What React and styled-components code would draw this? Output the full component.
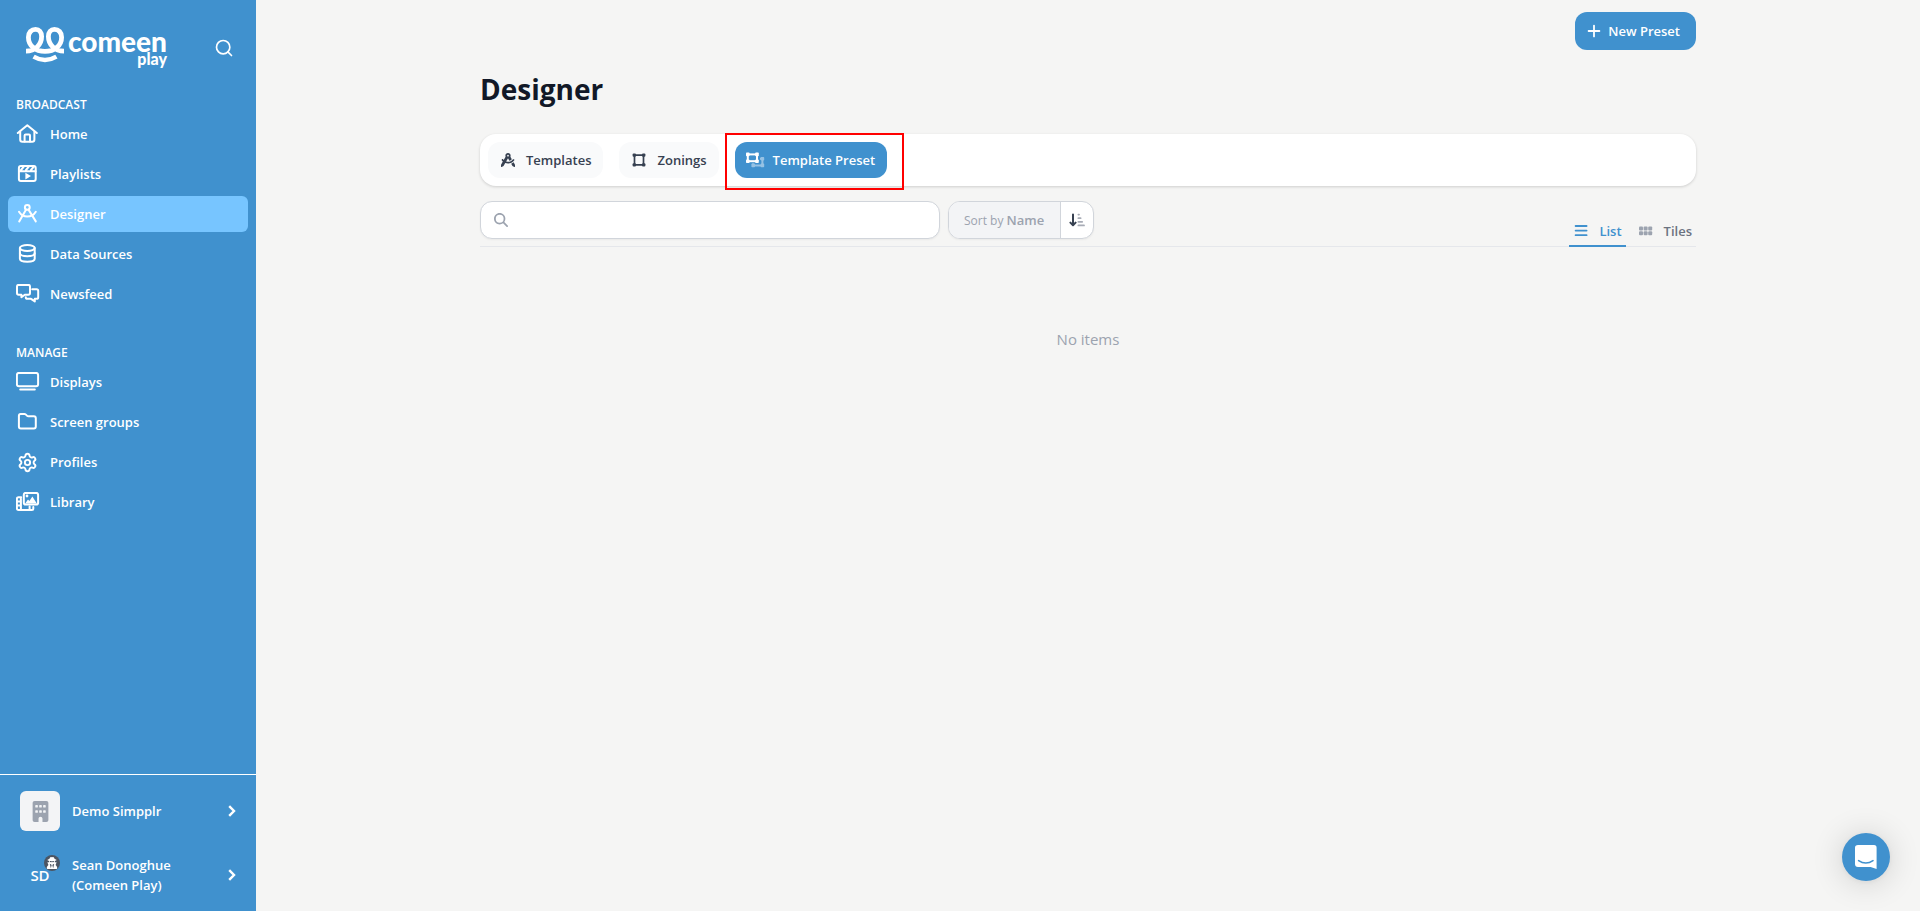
import React, { useState } from 'react';
import styled, { createGlobalStyle, ThemeProvider } from 'styled-components';
import { Search, Settings } from 'lucide-react';
import {
  FaBuilding,
  FaCompassDrafting,
  FaMagnifyingGlass,
  FaUserSecret,
} from 'react-icons/fa6';

const theme = {
  colors: {
    primary: '#4091ce',
    active: '#77c5ff',
    background: '#f5f5f4',
    card: '#ffffff',
    heading: '#111827',
    text: '#374151',
    textLight: '#6b7280',
    muted: '#9ca3af',
    border: '#d1d5db',
    line: '#e5e7eb',
    highlight: '#ff0000',
  },
  fontSizes: { xs: '12px', sm: '13px', md: '15px', xl: '28px' },
  radii: { sm: '6px', md: '12px', lg: '16px' },
};

/* Sidebar icons, all drawn in a 24x20 box */

const HomeIcon = () => (
  <NavIcon viewBox="0 0 24 20">
    <path d="M1.8 9 L11.3 1.2 L20.8 9" />
    <path d="M4.2 7.5 V15.5 Q4.2 17.7 6.4 17.7 H16.2 Q18.4 17.7 18.4 15.5 V7.5" />
    <path d="M8.6 17.5 V11.6 Q8.6 10.6 9.6 10.6 H13 Q14 10.6 14 11.6 V17.5" />
  </NavIcon>
);

const PlaylistIcon = () => (
  <NavIcon viewBox="0 0 24 20">
    <rect x="2.9" y="1.9" width="16.8" height="15.2" rx="2" />
    <path d="M3 7.3 H19.6 M5 6 L8 2.4 M10 6 L13 2.4 M15 6 L18 2.4" />
    <path className="solid" d="M9.4 8.8 L15 12.1 L9.4 15.4 Z" />
  </NavIcon>
);

const DesignerIcon = () => (
  <NavIcon viewBox="0 0 24 20">
    <circle cx="11.3" cy="3.4" r="2.4" />
    <path d="M10.1 5.6 L3.2 17.4 M12.5 5.6 L19.8 17.4" />
    <path d="M3 7.8 Q6 12.6 11.3 12.6 Q16.8 12.6 19.8 7.8" />
  </NavIcon>
);

const DataIcon = () => (
  <NavIcon viewBox="0 0 24 20">
    <ellipse cx="11.3" cy="4" rx="7.4" ry="3" />
    <path d="M3.9 4 V14.8 C3.9 18.7 18.7 18.7 18.7 14.8 V4" />
    <path d="M3.9 9.2 C3.9 13.1 18.7 13.1 18.7 9.2" />
  </NavIcon>
);

const NewsIcon = () => (
  <NavIcon viewBox="0 0 24 20">
    <path d="M2.6 0.9 H12.4 Q14 0.9 14 2.5 V9.1 Q14 10.7 12.4 10.7 H8.8 L5.4 13.2 V10.7 H2.6 Q1 10.7 1 9.1 V2.5 Q1 0.9 2.6 0.9 Z" />
    <path d="M16.2 5.2 H20.6 Q22.2 5.2 22.2 6.8 V13.2 Q22.2 14.8 20.6 14.8 H18.8 V17.4 L15 14.8 H11.4 Q9.8 14.8 9.8 13.2" />
  </NavIcon>
);

const DisplayIcon = () => (
  <NavIcon viewBox="0 0 24 20">
    <rect x="0.9" y="0.9" width="21.2" height="13.4" rx="2" />
    <path d="M4.2 17.5 H18.8" />
  </NavIcon>
);

const FolderIcon = () => (
  <NavIcon viewBox="0 0 24 20">
    <path d="M4.6 1.9 H8.4 Q9.2 1.9 9.9 2.6 L11.2 3.9 Q11.6 4.3 12.4 4.3 H17.9 Q19.8 4.3 19.8 6.2 V14.6 Q19.8 16.5 17.9 16.5 H4.8 Q2.9 16.5 2.9 14.6 V3.8 Q2.9 1.9 4.6 1.9 Z" />
  </NavIcon>
);

const GearIcon = () => (
  <GearSlot>
    <Settings size={21} strokeWidth={2.2} />
  </GearSlot>
);

const LibraryIcon = () => (
  <NavIcon viewBox="0 0 24 20">
    <rect x="7.8" y="0.9" width="14.3" height="11.6" rx="1.8" />
    <path className="solid" d="M9.2 11.4 L12 7.4 L13.4 9 L16.4 4.4 L20.8 11.4 Z" />
    <circle className="solid" cx="11" cy="4" r="1.4" />
    <path d="M5.2 5.2 H2.4 Q0.9 5.2 0.9 6.7 V16.4 Q0.9 17.9 2.4 17.9 H15.8 Q17.3 17.9 17.3 16.4 V15 M4.9 5.2 V17.8 M13.6 14.6 V17.8 M1 9.4 H4.8 M1 13.6 H4.8" />
  </NavIcon>
);

const ChevronIcon = () => (
  <svg width="8" height="12" viewBox="0 0 8 12" fill="none" stroke="currentColor" strokeWidth="2.4" aria-hidden="true">
    <path d="M1.2 1.2 L6 6 L1.2 10.8" />
  </svg>
);

const ZoningIcon = () => (
  <TabIcon viewBox="0 0 16 16">
    <path strokeWidth="1.7" d="M3.4 3.2 H12.6 M3.4 12.8 H12.6 M3.5 3.4 V12.6 M12.5 3.4 V12.6" />
    <g fill="currentColor" stroke="none">
      <rect x="1.6" y="1.4" width="3.4" height="3.4" rx="1" />
      <rect x="11" y="1.4" width="3.4" height="3.4" rx="1" />
      <rect x="1.6" y="11.2" width="3.4" height="3.4" rx="1" />
      <rect x="11" y="11.2" width="3.4" height="3.4" rx="1" />
    </g>
  </TabIcon>
);

const PresetIcon = () => (
  <TabIcon viewBox="2 0 16 16">
    <g opacity="0.45">
      <path strokeWidth="2" d="M15 6.8 H17.4 V13.4 H8 V11.4" />
      <g fill="currentColor" stroke="none">
        <rect x="15.6" y="5" width="3.6" height="3.6" rx="0.8" />
        <rect x="15.6" y="11.6" width="3.6" height="3.6" rx="0.8" />
        <rect x="6.4" y="11.6" width="3.6" height="3.6" rx="0.8" />
      </g>
    </g>
    <rect x="2.8" y="2.4" width="9.2" height="6.8" strokeWidth="2" />
    <g fill="currentColor" stroke="none">
      <rect x="1" y="0.6" width="3.6" height="3.6" rx="0.8" />
      <rect x="10.2" y="0.6" width="3.6" height="3.6" rx="0.8" />
      <rect x="1" y="7.4" width="3.6" height="3.6" rx="0.8" />
      <rect x="10.2" y="7.4" width="3.6" height="3.6" rx="0.8" />
    </g>
  </TabIcon>
);

const SortIcon = () => (
  <svg width="16" height="14" viewBox="0 0 16 14" fill="none" strokeLinecap="round" aria-hidden="true">
    <path stroke="#374151" strokeWidth="2" strokeLinejoin="round" d="M4 1.4 V11.4 M1.4 9.6 L4 12.2 L6.6 9.6" />
    <path stroke="#a8acb6" strokeWidth="1.8" d="M9.4 1.6 H10 M9.4 5.2 H11.6 M9.4 8.8 H13.2 M9.4 12.4 H15" />
  </svg>
);

const ListIcon = () => (
  <svg width="16" height="14" viewBox="0 0 16 14" stroke="currentColor" strokeWidth="1.8" strokeLinecap="round" aria-hidden="true">
    <path d="M2.6 2 H13.6 M2.6 6.6 H13.6 M2.6 11.2 H13.6" />
  </svg>
);

const TilesIcon = () => (
  <svg width="16" height="14" viewBox="0 0 16 14" fill="#9ca3af" aria-hidden="true">
    <rect x="1" y="2.6" width="4" height="4" rx="1" />
    <rect x="5.6" y="2.6" width="4" height="4" rx="1" />
    <rect x="10.2" y="2.6" width="4" height="4" rx="1" />
    <rect x="1" y="7.2" width="4" height="4" rx="1" />
    <rect x="5.6" y="7.2" width="4" height="4" rx="1" />
    <rect x="10.2" y="7.2" width="4" height="4" rx="1" />
  </svg>
);

const PlusIcon = () => (
  <svg width="14" height="14" viewBox="0 0 14 14" stroke="currentColor" strokeWidth="1.8" strokeLinecap="round" aria-hidden="true">
    <path d="M7 1.6 V12.4 M1.6 7 H12.4" />
  </svg>
);

const LogoMark = () => (
  <svg width="38" height="36" viewBox="0 0 38 36" fill="none" stroke="#fff" strokeWidth="4.8" aria-hidden="true">
    <path d="M0 24.2 C9 24.2 15.6 18 15.6 9.6 C15.6 5 13.2 2.4 9.6 2.4 C5.4 2.4 2.4 5.4 2.4 10.2 C2.4 18.6 9.4 24.4 19 24.4 C28.6 24.4 35.6 18.6 35.6 10.2 C35.6 5.4 32.6 2.4 28.4 2.4 C24.8 2.4 22.4 5 22.4 9.6 C22.4 18 29 24.2 38 24.2" />
    <path strokeWidth="4.4" d="M7.6 29.6 Q19 36.4 30.4 29.6" />
  </svg>
);

const ChatIcon = () => (
  <svg width="22" height="24" viewBox="0 0 22 24" aria-hidden="true">
    <path fill="#fff" d="M3 0 H19 Q21.6 0 21.6 2.8 V24 L15.6 22 H3 Q0 22 0 19 V2.8 Q0 0 3 0 Z" />
    <path fill="none" stroke="#4091ce" strokeWidth="1.6" strokeLinecap="round" d="M3.6 15.6 Q10.8 20.4 18 15.6" />
  </svg>
);

const broadcastItems = [
  { label: 'Home', icon: <HomeIcon /> },
  { label: 'Playlists', icon: <PlaylistIcon /> },
  { label: 'Designer', icon: <DesignerIcon />, active: true },
  { label: 'Data Sources', icon: <DataIcon /> },
  { label: 'Newsfeed', icon: <NewsIcon /> },
];

const manageItems = [
  { label: 'Displays', icon: <DisplayIcon /> },
  { label: 'Screen groups', icon: <FolderIcon /> },
  { label: 'Profiles', icon: <GearIcon /> },
  { label: 'Library', icon: <LibraryIcon /> },
];

const NavGroup = ({ title, items }) => (
  <NavSection>
    <NavTitle>{title}</NavTitle>
    <NavList>
      {items.map((item) => (
        <li key={item.label}>
          <NavLink href="#" $active={item.active}>
            {item.icon}
            {item.label}
          </NavLink>
        </li>
      ))}
    </NavList>
  </NavSection>
);

const App = () => {
  const [query, setQuery] = useState('');

  return (
    <ThemeProvider theme={theme}>
      <GlobalStyle />
      <Layout>
        <Sidebar>
          <SidebarHeader>
            <LogoLink href="#">
              <LogoMark />
              <LogoText>
                <LogoName>comeen</LogoName>
                <LogoProduct>play</LogoProduct>
              </LogoText>
            </LogoLink>
            <SearchButton type="button" aria-label="Search">
              <Search size={20} strokeWidth={2} />
            </SearchButton>
          </SidebarHeader>

          <nav>
            <NavGroup title="BROADCAST" items={broadcastItems} />
            <NavGroup title="MANAGE" items={manageItems} />
          </nav>

          <SidebarFooter>
            <AccountButton type="button">
              <Avatar $filled>
                <FaBuilding size={21} />
              </Avatar>
              <AccountName>Demo Simpplr</AccountName>
              <ChevronIcon />
            </AccountButton>
            <AccountButton type="button">
              <Avatar>
                SD
                <AvatarBadge>
                  <FaUserSecret size={12} />
                </AvatarBadge>
              </Avatar>
              <AccountName>Sean Donoghue (Comeen Play)</AccountName>
              <ChevronIcon />
            </AccountButton>
          </SidebarFooter>
        </Sidebar>

        <Main>
          <Content>
            <Actions>
              <PrimaryButton type="button">
                <PlusIcon />
                New Preset
              </PrimaryButton>
            </Actions>

            <Title>Designer</Title>

            <TabCard>
              <Tab type="button">
                <TabIconSlot>
                  <FaCompassDrafting size={14} />
                </TabIconSlot>
                Templates
              </Tab>
              <Tab type="button">
                <ZoningIcon />
                Zonings
              </Tab>
              <TabHighlight>
                <Tab type="button" $active>
                  <PresetIcon />
                  Template Preset
                </Tab>
                <HighlightFrame />
              </TabHighlight>
            </TabCard>

            <Toolbar>
              <SearchBox>
                <FaMagnifyingGlass size={14} />
                <SearchInput
                  type="search"
                  aria-label="Search presets"
                  value={query}
                  onChange={(e) => setQuery(e.target.value)}
                />
              </SearchBox>
              <SortGroup>
                <SortField type="button">
                  Sort by <strong>Name</strong>
                </SortField>
                <SortDirection type="button" aria-label="Sort direction">
                  <SortIcon />
                </SortDirection>
              </SortGroup>
              <ViewSwitch>
                <ViewButton type="button" $active>
                  <ListIcon />
                  List
                </ViewButton>
                <ViewButton type="button">
                  <TilesIcon />
                  Tiles
                </ViewButton>
              </ViewSwitch>
            </Toolbar>

            <Empty>No items</Empty>
          </Content>
        </Main>

        <ChatButton type="button" aria-label="Open chat">
          <ChatIcon />
        </ChatButton>
      </Layout>
    </ThemeProvider>
  );
};

// Styled components
const GlobalStyle = createGlobalStyle`
  * {
    box-sizing: border-box;
  }

  body {
    margin: 0;
    background-color: ${({ theme }) => theme.colors.background};
    color: ${({ theme }) => theme.colors.text};
    font-family: "Open Sans", "Noto Sans", sans-serif;
    font-size: ${({ theme }) => theme.fontSizes.sm};
    line-height: 20px;
  }

  button, input {
    font: inherit;
    color: inherit;
  }

  button {
    cursor: pointer;
    border: 0;
    padding: 0;
    background: none;
  }
`;

const Layout = styled.div`
  display: flex;
  min-height: 100vh;
`;

const Sidebar = styled.aside`
  display: flex;
  flex-direction: column;
  flex: 0 0 256px;
  background-color: ${({ theme }) => theme.colors.primary};
  color: white;
`;

const SidebarHeader = styled.div`
  display: flex;
  align-items: center;
  justify-content: space-between;
  padding: 24px 22px 0 26px;
  margin-bottom: 31px;
`;

const LogoLink = styled.a`
  display: flex;
  align-items: center;
  gap: 4px;
  color: white;
  text-decoration: none;
`;

const LogoText = styled.span`
  display: flex;
  flex-direction: column;
  align-items: flex-end;
  padding-top: 6px;
  font-family: Lato, sans-serif;
  font-weight: 900;
`;

const LogoName = styled.span`
  font-size: 28px;
  line-height: 22px;
`;

const LogoProduct = styled.span`
  font-size: 16px;
  line-height: 14px;
`;

const SearchButton = styled.button`
  display: flex;
  padding-top: 6px;
`;

const NavSection = styled.section`
  padding: 0 8px;
  margin-bottom: 33px;
`;

const NavTitle = styled.h2`
  margin: 0 0 3px;
  padding: 0 8px;
  font-size: ${({ theme }) => theme.fontSizes.xs};
  font-weight: 600;
  line-height: 16px;
`;

const NavList = styled.ul`
  display: grid;
  gap: 4px;
  margin: 0;
  padding: 0;
  list-style: none;
`;

const NavLink = styled.a`
  display: flex;
  align-items: center;
  gap: 10px;
  height: 36px;
  padding: 0 8px;
  border-radius: ${({ theme }) => theme.radii.sm};
  background-color: ${({ theme, $active }) => ($active ? theme.colors.active : 'transparent')};
  color: white;
  font-weight: 600;
  text-decoration: none;
`;

const NavIcon = styled.svg`
  width: 24px;
  height: 20px;
  fill: none;
  stroke: currentColor;
  stroke-width: 2;
  stroke-linecap: round;
  stroke-linejoin: round;

  .solid {
    fill: currentColor;
    stroke: none;
  }
`;

const GearSlot = styled.span`
  display: flex;
  width: 24px;
  padding-left: 1px;
`;

const SidebarFooter = styled.div`
  margin-top: auto;
  padding: 4px 0;
  border-top: 1px solid white;
`;

const AccountButton = styled.button`
  display: flex;
  align-items: center;
  width: 100%;
  height: 64px;
  padding: 0 20px;
  text-align: left;
`;

const Avatar = styled.span`
  position: relative;
  display: flex;
  align-items: center;
  justify-content: center;
  width: 40px;
  height: 40px;
  border-radius: ${({ theme }) => theme.radii.sm};
  background-color: ${({ $filled }) => ($filled ? '#f3f4f6' : 'transparent')};
  color: ${({ theme, $filled }) => ($filled ? theme.colors.muted : 'white')};
  font-size: ${({ theme }) => theme.fontSizes.md};
  font-weight: 600;
`;

const AvatarBadge = styled.span`
  position: absolute;
  top: 0;
  right: 0;
  display: flex;
  align-items: center;
  justify-content: center;
  width: 16px;
  height: 16px;
  border-radius: 50%;
  background-color: #4b5563;
  color: white;
`;

const AccountName = styled.span`
  flex: 1;
  padding: 0 32px 0 12px;
  font-weight: 600;
`;

const Main = styled.main`
  flex: 1;
  min-width: 0;
`;

const Content = styled.div`
  max-width: 1280px;
  margin: 0 auto;
  padding: 12px 32px;
`;

const Actions = styled.div`
  display: flex;
  justify-content: flex-end;
`;

const PrimaryButton = styled.button`
  display: flex;
  align-items: center;
  gap: 7px;
  height: 38px;
  padding: 0 16px 0 12px;
  border-radius: ${({ theme }) => theme.radii.md};
  background-color: ${({ theme }) => theme.colors.primary};
  color: white;
  font-weight: 600;
`;

const Title = styled.h1`
  margin: 21px 0 27px;
  color: ${({ theme }) => theme.colors.heading};
  font-size: ${({ theme }) => theme.fontSizes.xl};
  font-weight: 700;
  line-height: 36px;
`;

const TabCard = styled.div`
  display: flex;
  gap: 16px;
  margin-bottom: 15px;
  padding: 8px;
  border-radius: ${({ theme }) => theme.radii.lg};
  background-color: ${({ theme }) => theme.colors.card};
  box-shadow: 0 1px 3px rgba(0, 0, 0, 0.16);
`;

const Tab = styled.button`
  display: flex;
  align-items: center;
  gap: 10px;
  height: 36px;
  padding: 0 12px;
  border-radius: ${({ theme }) => theme.radii.md};
  background-color: ${({ theme, $active }) => ($active ? theme.colors.primary : '#f9fafb')};
  color: ${({ theme, $active }) => ($active ? 'white' : theme.colors.text)};
  font-weight: 600;
`;

const TabIcon = styled.svg`
  width: 16px;
  height: 16px;
  overflow: visible;
  fill: none;
  stroke: currentColor;
`;

const TabIconSlot = styled.span`
  display: flex;
  justify-content: center;
  width: 16px;
`;

const TabHighlight = styled.div`
  position: relative;
`;

const HighlightFrame = styled.span`
  position: absolute;
  top: -9px;
  right: -17px;
  bottom: -12px;
  left: -10px;
  border: 2px solid ${({ theme }) => theme.colors.highlight};
  pointer-events: none;
`;

const Toolbar = styled.div`
  display: flex;
  align-items: flex-start;
  gap: 8px;
  height: 46px;
  border-bottom: 1px solid ${({ theme }) => theme.colors.line};
`;

const SearchBox = styled.div`
  display: flex;
  align-items: center;
  gap: 12px;
  flex: 0 1 460px;
  height: 38px;
  padding: 0 13px;
  border: 1px solid ${({ theme }) => theme.colors.border};
  border-radius: ${({ theme }) => theme.radii.md};
  background-color: white;
  color: ${({ theme }) => theme.colors.muted};
  box-shadow: 0 1px 2px rgba(0, 0, 0, 0.05);
`;

const SearchInput = styled.input`
  flex: 1;
  min-width: 0;
  border: 0;
  outline: 0;
  background: none;
  color: ${({ theme }) => theme.colors.text};
`;

const SortGroup = styled.div`
  display: flex;
  height: 38px;
  overflow: hidden;
  border: 1px solid ${({ theme }) => theme.colors.border};
  border-radius: ${({ theme }) => theme.radii.md};
  background-color: white;
  box-shadow: 0 1px 2px rgba(0, 0, 0, 0.05);
`;

const SortField = styled.button`
  padding: 0 16px 0 15px;
  border-right: 1px solid ${({ theme }) => theme.colors.border};
  background-color: #f3f4f6;
  color: ${({ theme }) => theme.colors.muted};
  font-size: ${({ theme }) => theme.fontSizes.xs};

  strong {
    font-size: ${({ theme }) => theme.fontSizes.sm};
    font-weight: 600;
  }
`;

const SortDirection = styled.button`
  display: flex;
  align-items: center;
  padding: 0 8px;
`;

const ViewSwitch = styled.div`
  display: flex;
  align-self: flex-end;
  gap: 8px;
  margin-left: auto;
  margin-bottom: -1px;
`;

const ViewButton = styled.button`
  display: flex;
  align-items: center;
  gap: 10px;
  height: 30px;
  padding: 0 4px;
  border-bottom: 2px solid ${({ theme, $active }) => ($active ? theme.colors.primary : 'transparent')};
  color: ${({ theme, $active }) => ($active ? theme.colors.primary : theme.colors.textLight)};
  font-weight: 600;
`;

const Empty = styled.p`
  margin: 0;
  padding: 80px 0;
  color: ${({ theme }) => theme.colors.muted};
  font-size: ${({ theme }) => theme.fontSizes.md};
  line-height: 24px;
  text-align: center;
`;

const ChatButton = styled.button`
  position: fixed;
  right: 30px;
  bottom: 30px;
  display: flex;
  align-items: center;
  justify-content: center;
  width: 48px;
  height: 48px;
  border-radius: 50%;
  background-color: ${({ theme }) => theme.colors.primary};
  box-shadow: 0 2px 32px rgba(0, 0, 0, 0.16), 0 1px 6px rgba(0, 0, 0, 0.06);
`;

export default App;
